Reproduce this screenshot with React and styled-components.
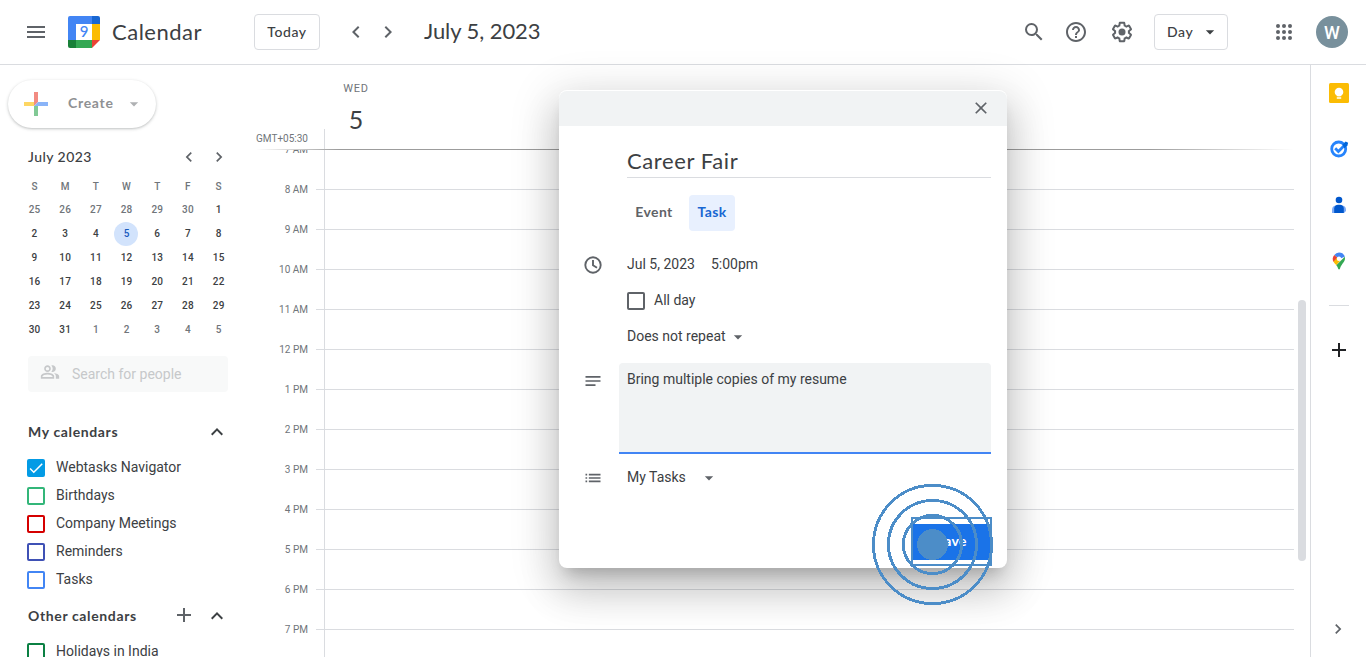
import React from "react";
import styled, { createGlobalStyle, css } from "styled-components";
import {
  MdMenu, MdSearch, MdHelpOutline, MdChevronLeft, MdChevronRight, MdClose,
  MdArrowDropDown, MdAdd, MdExpandLess, MdNotes, MdList, MdOutlinePeopleAlt, MdCheck,
} from "react-icons/md";

const GlobalStyle = createGlobalStyle`
  * { box-sizing: border-box; }
  body { margin: 0; background: #fff; overflow: hidden; }
`;

const display = css`font-family: Lato, "Open Sans", sans-serif;`;

const Page = styled.div`
  display: flex;
  flex-direction: column;
  width: 1366px;
  height: 657px;
  overflow: hidden;
  position: relative;
  background: #fff;
  color: #3c4043;
  font: 14px/20px Roboto, sans-serif;
  svg { display: block; flex: none; }
`;

/* Top bar */
const TopBar = styled.header`
  display: flex;
  align-items: center;
  flex: none;
  height: 65px;
  padding: 0 18px 1px 24px;
  border-bottom: 1px solid #dadce0;
  color: #5f6368;
`;
const Logo = styled.svg`margin-left: 20px;`;
const LogoDigit = styled.text`
  ${display}
  font-size: 15px;
  font-weight: 500;
  fill: #4285f4;
`;
const Brand = styled.span`
  ${display}
  width: 154px;
  padding-left: 12px;
  font-size: 22px;
  letter-spacing: 0.5px;
  color: #3c4043;
`;
const OutlineButton = styled.button`
  ${display}
  display: flex;
  align-items: center;
  justify-content: ${(p) => (p.$menu ? "space-between" : "center")};
  width: ${(p) => p.$w}px;
  height: 36px;
  padding: ${(p) => (p.$menu ? "0 7px 0 12px" : "0")};
  border: 1px solid #dadce0;
  border-radius: 4px;
  background: #fff;
  color: #3c4043;
  font-size: 14px;
  font-weight: 500;
  letter-spacing: 0.55px;
`;
const Arrows = styled.div`
  display: flex;
  gap: ${(p) => p.$gap}px;
  margin-left: ${(p) => p.$ml || 0}px;
  color: #5f6368;
`;
const DateTitle = styled.h1`
  ${display}
  flex: 1;
  margin: 0 0 0 24px;
  padding-bottom: 1px;
  font-size: 22px;
  font-weight: 400;
  letter-spacing: -0.07px;
  color: #3c4043;
`;
const Tools = styled.div`
  display: flex;
  align-items: center;
  margin-right: ${(p) => p.$mr}px;
  svg:nth-child(2) { margin: 0 22px 0 18px; }
`;
const Avatar = styled.div`
  width: 32px;
  height: 32px;
  margin-left: 20px;
  border-radius: 50%;
  background: #78909c;
  color: #fff;
  font-size: 18px;
  font-weight: 500;
  line-height: 34px;
  text-align: center;
`;

/* Body */
const Body = styled.div`
  display: flex;
  flex: 1;
  min-height: 0;
`;
const Sidebar = styled.aside`
  width: 256px;
  flex: none;
  padding-top: 15px;
  overflow: hidden;
`;
const CreateButton = styled.button`
  ${display}
  display: flex;
  align-items: center;
  width: 148px;
  height: 48px;
  margin: 0 0 0 8px;
  padding: 0 12px 0 16px;
  border: 0;
  border-radius: 24px;
  background: #fff;
  box-shadow: 0 1px 2px rgba(60, 64, 67, 0.2), 0 1px 3px 1px rgba(60, 64, 67, 0.1);
  color: #8f9193;
  font-size: 14px;
  font-weight: 700;
  letter-spacing: 0.7px;
  span { flex: 1; padding: 0 0 3px 20px; text-align: left; }
  svg:last-child { color: #afb1b3; }
`;
const MonthHead = styled.div`
  display: flex;
  align-items: center;
  justify-content: space-between;
  height: 32px;
  margin-top: 13px;
  padding: 0 27px 0 28px;
`;
const MonthName = styled.span`
  ${display}
  font-size: 14px;
  font-weight: 500;
  letter-spacing: 0.45px;
`;
const MonthGrid = styled.div`
  display: grid;
  grid-template-columns: repeat(7, 30.7px);
  grid-auto-rows: 24px;
  margin: 1px 0 0 19px;
  justify-items: center;
`;
const DayCell = styled.span`
  width: 24px;
  height: 24px;
  border-radius: 50%;
  font-size: 10px;
  font-weight: 500;
  line-height: ${(p) => (p.$head ? 26 : 24)}px;
  text-align: center;
  text-indent: 0.4px;
  letter-spacing: 0.2px;
  color: ${(p) => (p.$today ? "#185abc" : p.$muted ? "#70757a" : "#3c4043")};
  background: ${(p) => (p.$today ? "#d2e3fc" : "transparent")};
`;
const PeopleSearch = styled.div`
  display: flex;
  align-items: center;
  gap: 12px;
  width: 200px;
  height: 36px;
  margin: 14px 0 0 28px;
  padding-left: 12px;
  border-radius: 4px;
  background: #f8f9f9;
  color: #c6c8ca;
  svg { margin-bottom: 4px; }
`;
const SectionHead = styled.div`
  ${display}
  display: flex;
  align-items: center;
  height: 32px;
  margin: ${(p) => p.$mt}px 0 ${(p) => p.$mb || 0}px;
  padding: 0 27px 0 28px;
  font-size: 14px;
  font-weight: 700;
  letter-spacing: 0.63px;
  span { flex: 1; }
  svg + svg { margin-left: 9px; }
`;
const AddCalendar = styled(MdAdd)`
  margin-bottom: 2px;
  color: #5f6368;
`;
const CalendarRow = styled.div`
  display: flex;
  align-items: center;
  gap: 11px;
  height: 28px;
  padding-left: 27px;
  span { padding-bottom: 2px; }
`;
const Box = styled.i`
  width: 18px;
  height: 18px;
  border: 2px solid ${(p) => p.$color};
  border-radius: 2px;
  background: ${(p) => (p.$on ? p.$color : "#fff")};
  color: #fff;
  svg { margin: -2px; }
`;

/* Day view */
const Main = styled.main`
  display: flex;
  flex-direction: column;
  flex: 1;
  min-width: 0;
`;
const DayHead = styled.div`
  display: flex;
  height: 84px;
  flex: none;
`;
const Zone = styled.span`
  align-self: flex-end;
  width: 68px;
  padding-right: 16px;
  font-size: 10px;
  line-height: 20px;
  text-align: right;
  white-space: nowrap;
  color: #70757a;
`;
const HeadTick = styled.i`
  align-self: flex-end;
  width: 1px;
  height: 20px;
  background: #dadce0;
`;
const DayLabel = styled.div`
  display: flex;
  flex-direction: column;
  align-items: center;
  width: 62px;
  padding-top: 14px;
  font-size: 11px;
  letter-spacing: 0.8px;
  color: #70757a;
  b {
    ${display}
    margin-top: 10px;
    font-size: 25px;
    font-weight: 400;
    letter-spacing: 0;
    color: #3c4043;
  }
`;
const HeadLine = styled.div`
  flex: none;
  height: 1px;
  margin-right: 16px;
  background: linear-gradient(90deg, #fff, #9c9c9c 8%, #9c9c9c 86%, #fff);
`;
const Hours = styled.div`
  display: flex;
  flex: 1;
  min-height: 0;
  overflow: hidden;
`;
const HourLabels = styled.div`
  width: 60px;
  margin-top: -20px;
`;
const HourLabel = styled.div`
  height: 40px;
  padding-right: 8px;
  font-size: 10px;
  line-height: 40px;
  text-align: right;
  color: #70757a;
`;
const Lines = styled.div`flex: 1;`;
const HourLine = styled.div`
  height: 40px;
  padding-left: 8px;
  border-bottom: 1px solid #dadce0;
  &::before {
    content: "";
    display: block;
    width: 1px;
    height: 40px;
    background: #dadce0;
  }
`;
const Track = styled.div`
  width: 16px;
  padding: 150px 4px 0;
  &::before {
    content: "";
    display: block;
    height: 261px;
    border-radius: 4px;
    background: #dadce0;
  }
`;

/* Right rail */
const Rail = styled.aside`
  display: flex;
  flex-direction: column;
  width: 56px;
  flex: none;
  border-left: 1px solid #dadce0;
`;
const RailItem = styled.div`
  display: flex;
  align-items: center;
  justify-content: center;
  height: 56px;
  margin-top: ${(p) => (p.$last ? "auto" : 0)};
  padding: ${(p) => (p.$last ? "0 1px 0 0" : "0 0 0 1px")};
  color: ${(p) => p.$color || "#5f6368"};
`;
const RailRule = styled.div`
  height: 1px;
  margin: 16px 17px 16px 18px;
  background: #dadce0;
`;

/* Task dialog */
const Dialog = styled.section`
  position: absolute;
  left: 559px;
  top: 90px;
  width: 448px;
  height: 478px;
  padding-top: 1px;
  border-radius: 8px;
  background: #fff;
  box-shadow: 0 24px 38px 3px rgba(0, 0, 0, 0.14), 0 9px 46px 8px rgba(0, 0, 0, 0.12),
    0 11px 15px -7px rgba(0, 0, 0, 0.2);
`;
const DialogBar = styled.div`
  display: flex;
  align-items: center;
  justify-content: flex-end;
  height: 35px;
  padding: 0 16px 1px 0;
  background: #f1f3f4;
  color: #5f6368;
  border-radius: 8px 8px 0 0;
`;
const TitleField = styled.div`
  ${display}
  height: 52px;
  margin: 0 16px 0 68px;
  padding-top: 21px;
  border-bottom: 1px solid #dadce0;
  font-size: 22px;
  line-height: 28px;
  letter-spacing: 0.6px;
`;
const Tabs = styled.div`
  display: flex;
  gap: 8px;
  margin: 17px 0 0 68px;
`;
const Tab = styled.span`
  ${display}
  width: ${(p) => p.$w}px;
  height: 36px;
  border-radius: 4px;
  background: ${(p) => (p.$on ? "#e8f0fe" : "transparent")};
  color: ${(p) => (p.$on ? "#1967d2" : "#5f6368")};
  font-size: 14px;
  font-weight: 700;
  line-height: 34px;
  letter-spacing: 0.4px;
  text-align: center;
`;
const FieldRow = styled.div`
  display: flex;
  align-items: ${(p) => (p.$top ? "flex-start" : "center")};
  height: ${(p) => p.$h}px;
  margin-top: ${(p) => p.$mt || 0}px;
  padding: 0 16px 0 ${(p) => (p.$indent ? 68 : 24)}px;
  color: #3c4043;
  > svg:first-child { color: #5f6368; margin: ${(p) => (p.$top ? "8px" : "0")} 24px 0 0; }
`;
const Value = styled.span`
  padding-left: ${(p) => p.$pl || 0}px;
  padding-bottom: 2px;
`;
const Caret = styled(MdArrowDropDown)`
  margin: 0 0 1px ${(p) => p.$ml}px;
  color: #5f6368;
`;
const Notes = styled.div`
  flex: 1;
  height: 91px;
  margin-left: -8px;
  padding: 6px 8px;
  border-bottom: 2px solid #4285f4;
  border-radius: 4px 4px 0 0;
  background: #f1f3f4;
`;
const SaveButton = styled.button`
  ${display}
  display: block;
  width: 79px;
  height: 36px;
  margin: 28px 16px 0 auto;
  padding: 0 0 3px;
  border: 0;
  background: #1a73e8;
  color: #fff;
  font-size: 14px;
  font-weight: 700;
  letter-spacing: 0.3px;
`;
const ClickMarker = styled.svg`
  position: absolute;
  left: 860px;
  top: 470px;
  shape-rendering: crispEdges;
`;

const GearIcon = () => (
  <svg width="24" height="24" viewBox="0 0 24 24" fill="currentColor">
    <path d="M13.85 22.25h-3.7c-.74 0-1.36-.54-1.45-1.27l-.27-1.89c-.27-.14-.53-.29-.79-.46l-1.8.72c-.7.26-1.47-.03-1.81-.65L2.2 15.53c-.35-.66-.2-1.44.36-1.88l1.53-1.19c-.01-.15-.02-.3-.02-.46 0-.15.01-.31.02-.46l-1.52-1.19c-.59-.45-.74-1.26-.37-1.88l1.85-3.19c.34-.62 1.11-.9 1.79-.63l1.81.73c.26-.17.52-.32.78-.46l.27-1.91c.09-.7.71-1.25 1.44-1.25h3.7c.74 0 1.36.54 1.45 1.27l.27 1.89c.27.14.53.29.79.46l1.8-.72c.71-.26 1.48.03 1.82.65l1.84 3.18c.36.66.2 1.44-.36 1.88l-1.52 1.19c.01.15.02.3.02.46s-.01.31-.02.46l1.52 1.19c.56.45.72 1.23.37 1.86l-1.86 3.22c-.34.62-1.11.9-1.8.63l-1.8-.72c-.26.17-.52.32-.78.46l-.27 1.91c-.1.68-.72 1.22-1.46 1.22zm-3.23-2h2.76l.37-2.55.53-.22c.44-.18.88-.44 1.34-.78l.45-.34 2.38.96 1.38-2.4-2.03-1.58.07-.56c.03-.26.06-.51.06-.78s-.03-.53-.06-.78l-.07-.56 2.03-1.58-1.39-2.4-2.39.96-.45-.35c-.42-.32-.87-.58-1.33-.77l-.52-.22-.37-2.55h-2.76l-.37 2.55-.53.21c-.44.19-.88.44-1.34.79l-.45.33-2.38-.95-1.39 2.39 2.03 1.58-.07.56a7 7 0 0 0-.06.79c0 .26.02.53.06.78l.07.56-2.03 1.58 1.38 2.4 2.39-.96.45.35c.43.33.86.58 1.33.77l.53.22.38 2.55z" />
    <circle cx="12" cy="12" r="3.5" />
  </svg>
);

const AppsIcon = () => (
  <svg width="24" height="24" viewBox="0 0 24 24" fill="currentColor">
    {[6, 12, 18].map((y) => [6, 12, 18].map((x) => <circle key={`${x}-${y}`} cx={x} cy={y} r="2" />))}
  </svg>
);

const ClockIcon = () => (
  <svg width="20" height="20" viewBox="0 0 20 20" fill="none" stroke="currentColor" strokeWidth="1.9">
    <circle cx="10" cy="10" r="7.700" />
    <path d="M10 5v5.300l4 2.400" />
  </svg>
);

const CalendarLogo = () => (
  <Logo width="32" height="32" viewBox="0 0 32 32">
    <path d="M2 0H24V8H8V24H0V2A2 2 0 0 1 2 0Z" fill="#4285f4" />
    <path d="M24 0h6a2 2 0 0 1 2 2v6h-8Z" fill="#1967d2" />
    <path d="M24 8h8v16h-8Z" fill="#fbbc04" />
    <path d="M8 24h16v8H8Z" fill="#34a853" />
    <path d="M0 24h8v8H2a2 2 0 0 1-2-2Z" fill="#188038" />
    <path d="M24 24h8l-8 8Z" fill="#ea4335" />
    <LogoDigit x="16" y="21.3" textAnchor="middle">9</LogoDigit>
  </Logo>
);

const CreatePlus = () => (
  <svg width="24" height="24" viewBox="0 0 24 24">
    <path d="M10 0h4v10l-4 4Z" fill="#f28b82" />
    <path d="M0 10h10v4H0Z" fill="#fdd663" />
    <path d="M10 14h4v10h-4Z" fill="#81c995" />
    <path d="M14 10h10v4H10Z" fill="#8ab4f8" />
  </svg>
);

const KeepIcon = () => (
  <svg width="20" height="20" viewBox="0 0 20 20">
    <rect width="20" height="20" rx="1.5" fill="#fbbc04" />
    <circle cx="10" cy="9" r="4.3" fill="#fff" />
    <path d="M7.8 11h4.4v2.3H7.8ZM7.8 14.2h4.4v1.5H7.8Z" fill="#fff" />
  </svg>
);

const TasksIcon = () => (
  <svg width="20" height="20" viewBox="0 0 20 20" fill="none">
    <circle cx="9.700" cy="10" r="7" stroke="#2684fc" strokeWidth="2.800" />
    <path d="M6.200 9.200 9.400 12.400 17 4.800" stroke="#2684fc" strokeWidth="2.800" />
    <path d="m13.400 5.700 3.200-3.100 2.500 1.200-.6 2.500-3 2.900Z" fill="#0066da" />
  </svg>
);

const ContactsIcon = () => (
  <svg width="20" height="20" viewBox="0 0 20 20">
    <circle cx="10" cy="5" r="3.3" fill="#0057cc" />
    <path d="M3 18v-3.500C3 11.500 5 10.400 7.500 10.400h5c2.500 0 4.500 1.100 4.500 4.100V16l-2 2Z" fill="#7baaf7" />
    <path d="M5.200 18v-4.500C5.200 11 7 9.700 9 9.700h2c2 0 3.800 1.300 3.800 3.800V18Z" fill="#0057cc" />
  </svg>
);

const MapsIcon = () => (
  <svg width="20" height="20" viewBox="0 0 20 20">
    <path d="M10 1.600a6.100 6.100 0 0 1 5.800 4.200L10 7.900 5.300 4A6.100 6.100 0 0 1 10 1.600Z" fill="#4285f4" />
    <path d="M5.300 3.900 8.800 6.900 4.600 11A6.200 6.200 0 0 1 5.300 3.900Z" fill="#ea4335" />
    <path d="M4.500 10.800 8.300 6.600 11.600 9.300 7.300 14.300C6.300 13 5 12 4.500 10.800Z" fill="#fbbc04" />
    <path d="M15.800 5.700c1.200 5-3.200 6.300-4.900 12.100-.3.800-1.400.8-1.700 0-.5-1.400-1-2.500-1.900-3.500Z" fill="#34a853" />
    <circle cx="10" cy="7.700" r="2.200" fill="#fff" />
  </svg>
);

const WEEKDAYS = ["S", "M", "T", "W", "T", "F", "S"];
const DAYS = Array.from({ length: 42 }, (_, i) => {
  const n = i - 5;
  return { label: n < 1 ? n + 30 : n > 31 ? n - 31 : n, muted: n < 1 || n > 31, today: n === 5 };
});
const CALENDARS = [
  ["Webtasks Navigator", "#039be5", true],
  ["Birthdays", "#33b679"],
  ["Company Meetings", "#d50000"],
  ["Reminders", "#3f51b5"],
  ["Tasks", "#4285f4"],
];
const HOURS = ["7 AM", "8 AM", "9 AM", "10 AM", "11 AM", "12 PM", "1 PM", "2 PM", "3 PM", "4 PM", "5 PM", "6 PM", "7 PM"];

const CalendarItem = ({ name, color, on }) => (
  <CalendarRow>
    <Box $color={color} $on={on}>{on && <MdCheck size={18} />}</Box>
    <span>{name}</span>
  </CalendarRow>
);

export default function App() {
  return (
    <Page>
      <GlobalStyle />
      <TopBar>
        <MdMenu size={24} />
        <CalendarLogo />
        <Brand>Calendar</Brand>
        <OutlineButton $w={66}>Today</OutlineButton>
        <Arrows $gap={8} $ml={24}>
          <MdChevronLeft size={24} />
          <MdChevronRight size={24} />
        </Arrows>
        <DateTitle>July 5, 2023</DateTitle>
        <Tools $mr={20}>
          <MdSearch size={24} />
          <MdHelpOutline size={24} />
          <GearIcon />
        </Tools>
        <Tools $mr={44}>
          <OutlineButton $w={74} $menu>Day<MdArrowDropDown size={20} /></OutlineButton>
        </Tools>
        <AppsIcon />
        <Avatar>W</Avatar>
      </TopBar>

      <Body>
        <Sidebar>
          <CreateButton>
            <CreatePlus />
            <span>Create</span>
            <MdArrowDropDown size={20} />
          </CreateButton>
          <MonthHead>
            <MonthName>July 2023</MonthName>
            <Arrows $gap={10}>
              <MdChevronLeft size={20} />
              <MdChevronRight size={20} />
            </Arrows>
          </MonthHead>
          <MonthGrid>
            {WEEKDAYS.map((d, i) => <DayCell key={"w" + i} $muted $head>{d}</DayCell>)}
            {DAYS.map((d, i) => <DayCell key={i} $muted={d.muted} $today={d.today}>{d.label}</DayCell>)}
          </MonthGrid>
          <PeopleSearch>
            <MdOutlinePeopleAlt size={20} />
            <span>Search for people</span>
          </PeopleSearch>
          <SectionHead $mt={24} $mb={6}>
            <span>My calendars</span>
            <MdExpandLess size={24} />
          </SectionHead>
          <div>
            {CALENDARS.map(([name, color, on]) => <CalendarItem key={name} name={name} color={color} on={on} />)}
          </div>
          <SectionHead $mt={6} $mb={6}>
            <span>Other calendars</span>
            <AddCalendar size={24} />
            <MdExpandLess size={24} />
          </SectionHead>
          <CalendarItem name="Holidays in India" color="#0b8043" />
        </Sidebar>

        <Main>
          <DayHead>
            <Zone>GMT+05:30</Zone>
            <HeadTick />
            <DayLabel>WED<b>5</b></DayLabel>
          </DayHead>
          <HeadLine />
          <Hours>
            <HourLabels>{HOURS.map((h, i) => <HourLabel key={i}>{h}</HourLabel>)}</HourLabels>
            <Lines>{HOURS.map((h, i) => <HourLine key={i} />)}</Lines>
            <Track />
          </Hours>
        </Main>

        <Rail>
          <RailItem><KeepIcon /></RailItem>
          <RailItem><TasksIcon /></RailItem>
          <RailItem><ContactsIcon /></RailItem>
          <RailItem><MapsIcon /></RailItem>
          <RailRule />
          <RailItem $color="#202124"><MdAdd size={24} /></RailItem>
          <RailItem $last><MdChevronRight size={20} /></RailItem>
        </Rail>
      </Body>

      <Dialog>
        <DialogBar><MdClose size={20} /></DialogBar>
        <TitleField>Career Fair</TitleField>
        <Tabs>
          <Tab $w={54}>Event</Tab>
          <Tab $w={46} $on>Task</Tab>
        </Tabs>
        <FieldRow $h={36} $mt={16}>
          <ClockIcon />
          <Value>Jul 5, 2023</Value>
          <Value $pl={16}>5:00pm</Value>
        </FieldRow>
        <FieldRow $h={36} $indent>
          <Box $color="#5f6368" />
          <Value $pl={9}>All day</Value>
        </FieldRow>
        <FieldRow $h={36} $indent>
          <Value>Does not repeat</Value>
          <Caret size={20} $ml={2} />
        </FieldRow>
        <FieldRow $h={91} $mt={8} $top>
          <MdNotes size={20} />
          <Notes>Bring multiple copies of my resume</Notes>
        </FieldRow>
        <FieldRow $h={36} $mt={6}>
          <MdList size={20} />
          <Value>My Tasks</Value>
          <Caret size={20} $ml={13} />
        </FieldRow>
        <SaveButton>Save</SaveButton>
      </Dialog>

      <ClickMarker width="140" height="140" viewBox="0 0 140 140" fill="none" stroke="#4c8dc8">
        <rect x="52" y="48" width="79" height="47" strokeWidth="2" />
        <circle cx="72.500" cy="74.500" r="15.500" fill="#4c8dc8" stroke="none" />
        <circle cx="72.500" cy="74.500" r="29.100" strokeWidth="2.900" />
        <circle cx="72.500" cy="74.500" r="44.100" strokeWidth="2.900" />
        <circle cx="72.500" cy="74.500" r="59.100" strokeWidth="2.900" />
      </ClickMarker>
    </Page>
  );
}
